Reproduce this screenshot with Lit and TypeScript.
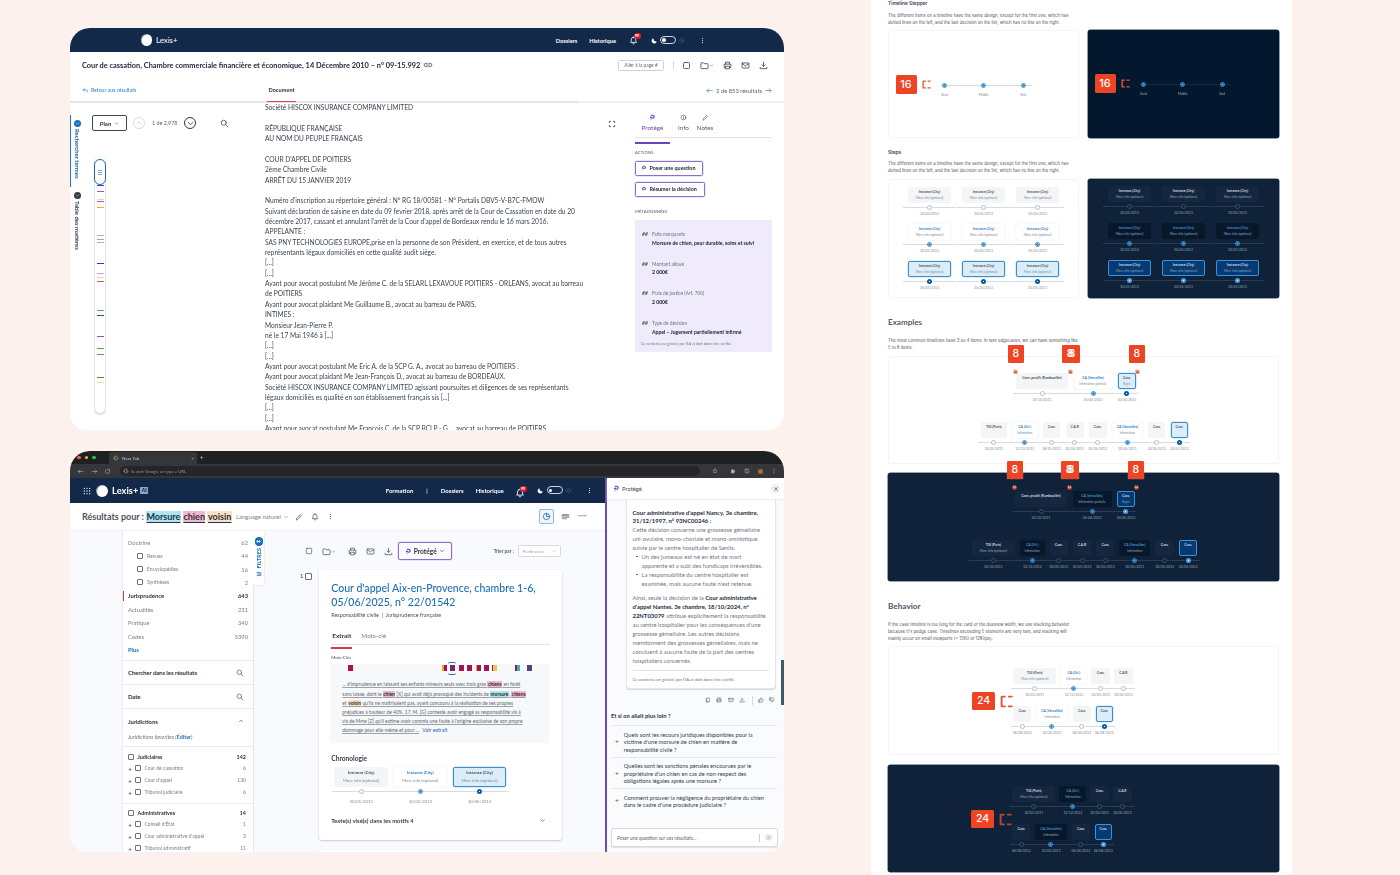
import { LitElement, html, css, svg, nothing } from 'lit';
import { customElement } from 'lit/decorators.js';

const P: Record<string, any> = {
  bell: svg`<path d="M6 1.6a2.9 2.9 0 0 0-2.9 2.9c0 2.8-1.1 4-1.1 4h8s-1.1-1.2-1.1-4A2.9 2.9 0 0 0 6 1.6zM5 10.2a1.1 1.1 0 0 0 2 0"/>`,
  moon: svg`<path fill="currentColor" stroke="none" d="M10 7.6A4.6 4.6 0 0 1 4.4 2 4.6 4.6 0 1 0 10 7.6z"/>`,
  sun: svg`<circle cx="6" cy="6" r="2.2"/><path d="M6 1v1.3M6 9.7V11M1 6h1.3M9.7 6H11M2.5 2.5l.9.9M8.6 8.6l.9.9M2.5 9.5l.9-.9M8.6 3.4l.9-.9"/>`,
  kebab: svg`<circle cx="6" cy="2.5" r="1" fill="currentColor" stroke="none"/><circle cx="6" cy="6" r="1" fill="currentColor" stroke="none"/><circle cx="6" cy="9.5" r="1" fill="currentColor" stroke="none"/>`,
  search: svg`<circle cx="5" cy="5" r="3.4"/><path d="M7.6 7.6l3 3"/>`,
  folder: svg`<path d="M1.2 3.2a.8.8 0 0 1 .8-.8h2.6l1 1.2H10a.8.8 0 0 1 .8.8v5a.8.8 0 0 1-.8.8H2a.8.8 0 0 1-.8-.8z"/>`,
  print: svg`<path d="M3.4 4V1.6h5.2V4M3.4 8.6H1.6V4.2h8.8v4.4H8.6M3.4 7h5.2v3.4H3.4z"/>`,
  mail: svg`<rect x="1.4" y="2.6" width="9.2" height="6.8" rx="1"/><path d="M1.6 3.4L6 6.6l4.4-3.2"/>`,
  dl: svg`<path d="M6 1.6v5.6M3.8 5L6 7.2 8.2 5M1.6 8.4v1.8h8.8V8.4"/>`,
  square: svg`<rect x="2" y="2" width="8" height="8" rx="1.2"/>`,
  chev: svg`<path d="M3 4.6L6 7.6l3-3"/>`,
  chevup: svg`<path d="M3 7.4L6 4.4l3 3"/>`,
  link: svg`<path d="M5 4H3.4a2 2 0 0 0 0 4H5M7 4h1.6a2 2 0 0 1 0 4H7M4.2 6h3.6"/>`,
  back: svg`<path d="M4.4 2.6L2 5l2.4 2.4M2 5h5a2.6 2.6 0 0 1 2.6 2.6v.8"/>`,
  left: svg`<path d="M10.6 6H1.6M4.6 3L1.6 6l3 3"/>`,
  right: svg`<path d="M1.4 6h9M7.4 3l3 3-3 3"/>`,
  expand: svg`<path d="M2 4V2h2M8 2h2v2M10 8v2H8M4 10H2V8"/>`,
  info: svg`<circle cx="6" cy="6" r="4.2"/><path d="M6 5.6v2.6M6 3.8v.4"/>`,
  pen: svg`<path d="M2 10l.6-2.4 5.4-5.4 1.8 1.8-5.4 5.4z"/>`,
  grid: svg`<g fill="currentColor" stroke="none"><circle cx="2" cy="2" r="1"/><circle cx="6" cy="2" r="1"/><circle cx="10" cy="2" r="1"/><circle cx="2" cy="6" r="1"/><circle cx="6" cy="6" r="1"/><circle cx="10" cy="6" r="1"/><circle cx="2" cy="10" r="1"/><circle cx="6" cy="10" r="1"/><circle cx="10" cy="10" r="1"/></g>`,
  chart: svg`<circle cx="6" cy="6" r="4.2"/><path d="M6 1.8V6h4.2"/>`,
  lines: svg`<g fill="currentColor" stroke="none"><rect x="1" y="3" width="10" height="2"/><rect x="1" y="6" width="10" height="1.6"/><rect x="1" y="8.6" width="7" height="1"/></g>`,
  minus: svg`<path d="M1 5h3M5.4 5h1.4M8 5h3"/>`,
  x: svg`<path d="M3 3l6 6M9 3l-6 6"/>`,
  copy: svg`<path d="M4 2h5v7H4zM2.4 3.6v6.8h5"/>`,
  up: svg`<path d="M1.8 5.4h1.8v5H1.8zM3.6 5.4L5.8 1.6c1 0 1.2.8 1 1.6l-.4 1.6h3c.6 0 .9.5.8 1l-.8 3.8c-.1.4-.4.6-.8.6H3.6"/>`,
  down: svg`<path d="M1.8 6.6h1.8v-5H1.8zM3.6 6.6l2.2 3.8c1 0 1.2-.8 1-1.6L6.4 7.2h3c.6 0 .9-.5.8-1l-.8-3.8c-.1-.4-.4-.6-.8-.6H3.6"/>`,
  sparkle: svg`<circle cx="6" cy="6" r="4.4"/><path d="M6 3.6v4.8M3.6 6h4.8"/>`,
  cal: svg`<rect x="2" y="3" width="8" height="7.4" rx=".8" fill="currentColor"/><path d="M2 5.4h8M4 1.6V3.4M8 1.6V3.4" stroke="#fff"/>`,
  bracket: svg`<path d="M4.5 1.5H1.5V10.5H4.5" stroke-width="1.8"/><path d="M8 1.5h3M8 10.5h3" stroke-width="1.5"/>`,
  arrowback: svg`<path d="M10 6H2M5 3L2 6l3 3"/>`,
  arrowfwd: svg`<path d="M2 6h8M7 3l3 3-3 3"/>`,
  reload: svg`<path d="M9.6 6a3.6 3.6 0 1 1-1-2.5L9.6 4.6V2"/>`,
  star: svg`<path d="M6 1.6l1.3 2.9 3.1.3-2.4 2 .8 3L6 8.3 3.2 9.8l.8-3-2.4-2 3.1-.3z"/>`,
  puzzle: svg`<path fill="currentColor" stroke="none" d="M2 3.6h2.2a1.2 1.2 0 1 1 2.4 0H9v2.2a1.2 1.2 0 1 1 0 2.4v2.2H2z"/>`,
  split: svg`<rect x="2" y="2.4" width="8" height="7.2" rx=".8"/><path d="M6 2.4v7.2"/>`,
  filter: svg`<path d="M2 3h8M2 6h8M2 9h8"/><circle cx="4" cy="3" r="1" fill="#fff"/><circle cx="8" cy="6" r="1" fill="#fff"/><circle cx="5" cy="9" r="1" fill="#fff"/>`,
};

const icon = (n: string, s = 9, cls = '') => html`<svg class="ic ${cls}" width=${s} height=${s} viewBox="0 0 12 12" fill="none" stroke="currentColor" stroke-width="1.1" stroke-linecap="round" stroke-linejoin="round" aria-hidden="true">${P[n]}</svg>`;

const protege = (s = 7) => html`<svg class="ic" width=${s} height=${s} viewBox="0 0 12 12" aria-hidden="true"><path fill="#7a55d6" d="M3 1.4h3.6a3.4 3.4 0 0 1 0 6.8H5V6h1.4a1.2 1.2 0 0 0 0-2.4H3z"/><path fill="#16234a" d="M2 4.6h2.6v2.6H2z"/><path fill="#b9a5ef" d="M3 8h2v2.6H3z"/></svg>`;

const gicon = () => html`<svg class="ic" width="6" height="6" viewBox="0 0 12 12" aria-hidden="true"><path fill="#ea4335" d="M6 1a5 5 0 0 1 3.6 1.5L8 4a2.8 2.8 0 0 0-4.3.8L2 3.4A5 5 0 0 1 6 1z"/><path fill="#fbbc05" d="M1.6 3.8l1.9 1.4a2.8 2.8 0 0 0 .2 2L2 8.5a5 5 0 0 1-.4-4.7z"/><path fill="#34a853" d="M2.3 9l1.7-1.3A2.8 2.8 0 0 0 8 8.2l1.5 1.4A5 5 0 0 1 2.3 9z"/><path fill="#4285f4" d="M11 6c0 1.3-.5 2.4-1.2 3.2L8.3 7.9c.3-.3.5-.7.6-1H6V5h4.9c.1.3.1.6.1 1z"/></svg>`;

type Item = [number, string, string, string, string];

const strip = (items: Item[], g: number, left = 0, cls = '') => html`
  <div class="strip ${cls}" style="--g:${g}px;margin-left:${left}px">
    ${items.map(([w, t, s, st, d]) => html`
      <div class="cell" style="width:${w}px">
        <div class="tbox ${st}">
          <div class="tt">${t}</div>
          ${s ? html`<div class="ts">${s}</div>` : nothing}
        </div>
        <div class="trail"><span class="node ${st}"></span></div>
        <div class="tdate">${d}</div>
      </div>`)}
  </div>`;

const D = '30/05/2013';
const ex1: Item[] = [
  [52, "Cons. prud'h (Rambouillet)", '', 'idle', '20/10/2011'],
  [39, 'CA (Versailles)', 'Infirmation partielle', 'on', '26/04/2012'],
  [17.7, 'Cass.', 'Rejet', 'act', '30/05/2013'],
];
const ex2 = (a: number, b: number, c: number, d: number, e: number, f: number, h: number, i: number, sub = ''): Item[] => [
  [a, 'TGI (Paris)', sub, 'idle', '20/03/2011'],
  [b, 'CA (Orl.)', 'Infirmation', 'on', '12/12/2012'],
  [c, 'Cass.', '', 'idle', '28/05/2013'],
  [d, 'C.A.R', '', 'idle', D],
  [e, 'Cass.', '', 'idle', D],
  [f, 'CA (Versailles)', 'Infirmation', 'on', '30/05/2011'],
  [h, 'Cass.', '', 'idle', D],
  [i, 'Cass.', '', 'act', D],
];
const be1: Item[] = [
  [43, 'TGI (Paris)', 'More info (optional)', 'idle', '20/03/2011'],
  [27, 'CA (Orl.)', 'Infirmation', 'on', '12/12/2012'],
  [18.7, 'Cass.', '', 'idle', '30/05/2013'],
  [18.7, 'C.A.R', '', 'idle', '30/05/2013'],
];
const be2: Item[] = [
  [18, 'Cass.', '', 'idle', '06/08/2012'],
  [32, 'CA (Versailles)', 'Infirmation', 'on', '30/05/2013'],
  [18.3, 'Cass.', '', 'idle', '06/05/2012'],
  [17.3, 'Cass.', '', 'act', '06/08/2013'],
];

const stepsGrid = () => html`${['idle', 'on', 'act'].map((st) => [0, 1, 2].map(() =>
  strip([[43.5, 'Instance (City)', 'More info (optional)', st, D]], 10)))}`;

const mini = () => html`
  <div class="mini">
    <div class="b16">16</div>
    <span class="brk">${icon('bracket', 9)}</span>
    <div class="ms">
      ${['Start', 'Middle', 'End'].map((l, i) => html`
        <div class="mcol">
          <div class="mrail r${i}"><span class="node on"></span></div>
          <div class="mlab">${l}</div>
        </div>`)}
    </div>
  </div>`;

const bdg = (x: number, y: number, t: string, cls = '') => html`<div class="b8 ${cls}" style="left:${x}px;top:${y}px">${t}</div>`;
const cal = (x: number, y: number) => html`<span class="calp" style="left:${x}px;top:${y}px">${icon('cal', 5)}</span>`;
const b8s = (top: number) => html`
  ${bdg(119, top, '8')}${bdg(173, top, '88', 'w')}${bdg(240, top, '8')}
  ${cal(123.5, top + 24)}${cal(178.5, top + 24)}${cal(245.5, top + 24)}`;

const docLines = [
  'Société HISCOX INSURANCE COMPANY LIMITED', '', 'RÉPUBLIQUE FRANÇAISE', 'AU NOM DU PEUPLE FRANÇAIS', '',
  "COUR D'APPEL DE POITIERS", '2ème Chambre Civile', 'ARRÊT DU 15 JANVIER 2019', '',
  "Numéro d'inscription au répertoire général : N° RG 18/00581 - N° Portalis DBV5-V-B7C-FMOW",
  'Suivant déclaration de saisine en date du 09 fevrier 2018, après arrêt de la Cour de Cassation en date du 20',
  "décembre 2017, cassant et annulant l'arrêt de la Cour d'appel de Bordeaux rendu le 16 mars 2016.",
  'APPELANTE :',
  'SAS PNY TECHNOLOGIES EUROPE,prise en la personne de son Président, en exercice, et de tous autres',
  'représentants légaux domiciliés en cette qualité audit siège.', '[...]', '[...]',
  'Ayant pour avocat postulant Me Jérôme C. de la SELARL LEXAVOUE POITIERS - ORLEANS, avocat au barreau',
  'de POITIERS', 'Ayant pour avocat plaidant Me Guillaume B., avocat au barreau de PARIS.', 'INTIMES :',
  'Monsieur Jean-Pierre P.', 'né le 17 Mai 1946 à [...]', '[...]', '[...]',
  'Ayant pour avocat postulant Me Eric A. de la SCP G. A., avocat au barreau de POITIERS .',
  'Ayant pour avocat plaidant Me Jean-François D., avocat au barreau de BORDEAUX.',
  'Société HISCOX INSURANCE COMPANY LIMITED agissant poursuites et diligences de ses représentants',
  'légaux domiciliés es qualité en son établissement français sis [...]', '[...]', '[...]',
  'Ayant pour avocat postulant Me François C. de la SCP BCLP - G..., avocat au barreau de POITIERS',
];

const ticks: [number, string][] = [
  [185, '#3d3ec0'], [191, '#8a63d2'], [199, '#f7d4a3'], [201, '#8a63d2'], [207, '#f0a93c'],
  [235, '#b9a2e6'], [239, '#8fb595'], [242, '#b9a2e6'], [263, '#4a2ab0'], [273, '#b9a2e6'], [277, '#f7d4a3'], [281, '#b0606a'],
  [310, '#8a7cc8'], [315, '#1f6b2f'], [336, '#7a5cc0'], [348, '#5f9a6e'], [354, '#5f9a6e'], [377, '#6a7d2a'], [382, '#f7d4a3'],
];

const marks: [number, string, string][] = [
  [348, '#a3154e', ''], [442, '#a3154e', '#f5a623'], [450, '#7a2d5e', ''], [458.5, '#a3154e', ''], [466.7, '#a3154e', ''],
  [475.7, '#a3154e', '#f5a623'], [483.3, '#a3154e', ''], [491.3, '#f5c14e', '#a3154e'], [515, '#2fb8c4', '#a3154e'], [527, '#5a3d7c', ''],
];

@customElement('app-root')
export class AppRoot extends LitElement {
  static styles = css`
    :host { display: block; width: 1400px; height: 875px; overflow: hidden; background: #fdf1ed; font-family: Lato, 'Liberation Sans', sans-serif; color: #2b3442; }
    * { box-sizing: border-box; }
    .ic { display: block; flex: none; }
    .page { display: flex; height: 875px; padding-left: 70px; filter: blur(.3px); }
    .left { width: 714px; padding-top: 28px; display: flex; flex-direction: column; gap: 21px; flex: none; }
    .win { position: relative; width: 714px; height: 402px; background: #fff; border-radius: 20px 20px 16px 16px; overflow: hidden; display: flex; flex-direction: column; flex: none; }
    .win.b { height: 401px; background: #f9fafd; }
    .right { width: 421px; margin-left: 87px; background: #fff; padding: 0 13px 0 17px; flex: none; height: 875px; overflow: hidden; }

    /* headers */
    .hdr { height: 24px; background: #12294a; color: #fff; display: flex; align-items: center; flex: none; font-size: 5.7px; font-weight: 700; }
    .hdr.a { padding-left: 70.5px; }
    .globe { width: 11.5px; height: 11.5px; border-radius: 50%; background: radial-gradient(circle at 62% 55%, #fff 55%, #9aa6b4 70%); flex: none; }
    .brand { margin-left: 4px; font-size: 7.8px; font-weight: 400; }
    .nav { margin-left: auto; display: flex; align-items: center; }
    .hdr.a .nav { margin-right: 78px; }
    .navsp { margin-left: 12px; }
    .bellw { position: relative; margin-left: 12.5px; display: block; }
    .bellw.big { margin-left: 10.7px; }
    .dot99 { position: absolute; left: 5px; top: -2.5px; width: 7px; height: 6px; background: #e21b2c; border-radius: 4px; font-size: 3.4px; line-height: 6px; text-align: center; color: #fff; }
    .moon { margin-left: 13px; }
    .big ~ .moon { margin-left: 12.5px; }
    .tog { width: 16px; height: 8px; border: 1px solid #cfd6df; border-radius: 5px; margin-left: 2.5px; position: relative; }
    .tog::after { content: ''; position: absolute; left: 1.2px; top: 1.2px; width: 3.6px; height: 3.6px; border-radius: 50%; background: #fff; }
    .sun { margin-left: 2px; color: #43566f; }
    .keb { margin-left: 14px; }
    .title { height: 26px; padding-left: 12px; display: flex; align-items: center; flex: none; }
    .title h1 { margin: 0; font-size: 7.4px; font-weight: 700; color: #22293a; white-space: nowrap; }
    .title .lk { margin-left: 3px; color: #5a6470; }
    .tools { margin-left: auto; margin-right: 16.5px; display: flex; align-items: center; gap: 9px; color: #3f4856; }
    .goto { width: 46px; height: 11px; border: 1px solid #cdd2d9; border-radius: 1.5px; font-size: 4.8px; color: #666f7b; text-align: center; line-height: 9.5px; }
    .vs { width: 1px; height: 8px; background: #d4d8dd; margin-right: -1.5px; }
    .fold { display: flex; align-items: center; }
    .row3 { height: 25px; display: flex; position: relative; flex: none; border-bottom: 2px solid #f0f1f3; align-items: center; padding: 1px 0 0 12px; }
    .row3::after { content: ''; position: absolute; left: 0; bottom: -2px; width: 508px; height: 2px; background: #e3e5e8; }
    .backl { display: flex; align-items: center; gap: 2px; color: #2f7fc0; font-size: 5.2px; width: 185px; }
    .dtab { position: relative; font-size: 5.6px; font-weight: 700; color: #333; width: 29px; text-align: center; line-height: 10px; }
    .dtab::after { content: ''; position: absolute; left: 0; right: 0; bottom: -7px; height: 1.5px; background: #e0434f; z-index: 1; }
    .pager { margin-left: auto; margin-right: 12px; display: flex; align-items: center; gap: 3px; color: #2f7fc0; font-size: 5.8px; }
    .pager span { color: #5a6470; }

    /* body A */
    .bodya { flex: 1; display: flex; min-height: 0; }
    .rail { width: 20px; flex: none; padding-top: 12px; color: #3a4453; }
    .vtab { width: 20px; display: flex; flex-direction: column; align-items: center; }
    .vtab.on { height: 72px; border-left: 1.5px solid #1f78c4; color: #1f5f9e; padding-right: 6px; }
    .vtab.off { margin-top: 5px; padding-right: 6px; }
    .vc { width: 7px; height: 7px; border-radius: 50%; background: #1870bd; color: #fff; margin-top: 5px; display: flex; align-items: center; justify-content: center; }
    .vtab.off .vc { background: #333c48; margin-top: 0; }
    .vt { writing-mode: vertical-rl; margin-top: 2px; font-weight: 700; white-space: nowrap; line-height: 7px; font-size: 5.95px; }
    .plan { width: 175px; flex: none; padding-top: 12px; }
    .planbar { display: flex; align-items: center; height: 16px; padding-left: 2px; }
    .planbtn { width: 35px; height: 16px; border: 1px solid #3f4856; border-radius: 2px; font-size: 6px; font-weight: 700; display: flex; align-items: center; justify-content: center; gap: 3px; }
    .cc { width: 12px; height: 12px; border: 1px solid #d8dbe0; border-radius: 50%; margin-left: 6px; color: #c4c8ce; display: flex; align-items: center; justify-content: center; }
    .of { margin-left: 7px; font-size: 5.4px; color: #636c78; width: 27px; white-space: nowrap; }
    .cc.dk { border-color: #2b3442; color: #2b3442; margin-left: 5px; }
    .sr { margin-left: 24px; color: #4a5361; }
    .track { position: relative; margin: 28px 0 0 4px; width: 12px; height: 255px; border: 1px solid #e3e5e9; border-top: none; border-radius: 0 0 6px 6px; background: #fff; box-shadow: 0 1px 1px #d8dade; }
    .tick { position: absolute; left: 1.5px; right: 1.5px; height: 1.4px; }
    .handle { position: absolute; left: -1px; top: 0; width: 12px; height: 26px; border: 1.6px solid #1f68ae; border-radius: 6px; background: #fff; display: flex; align-items: center; justify-content: center; }
    .handle::after { content: ''; width: 4px; height: 5px; background: repeating-linear-gradient(#7aa3d0 0 1px, transparent 1px 2px); }
    .doc { width: 360px; flex: none; font-size: 6.6px; color: #3c4452; overflow: hidden; position: relative; margin-top: -1px; }
    .doc div { height: 10.37px; line-height: 10.37px; white-space: nowrap; }
    .side { flex: 1; padding-left: 10px; position: relative; }
    .exp { position: absolute; left: -17px; top: 17px; color: #333; }
    .stabs { display: flex; height: 35px; margin-right: 12px; border-bottom: 1px solid #e3e3ea; padding-top: 11px; }
    .stab { display: flex; flex-direction: column; align-items: center; font-size: 6.4px; color: #555e6b; gap: 3px; }
    .stab.act { width: 35px; color: #6946b9; position: relative; }
    .stab.act::after { content: ''; position: absolute; left: 0; right: 0; bottom: -6.5px; height: 1.2px; background: #6946b9; }
    .stab.i { margin-left: 7px; width: 13px; }
    .stab.n { margin-left: 6px; width: 18px; }
    .cap { font-size: 4.2px; color: #4e5663; letter-spacing: .1px; margin-top: 12px; line-height: 5px; }
    .ai { display: flex; align-items: center; gap: 2.5px; width: 68px; height: 15.5px; margin-top: 5.5px; border: 1px solid #8a6fce; border-radius: 1.5px; box-shadow: 0 0 0 .5px #d9cff2; font-size: 5.4px; font-weight: 700; padding-left: 5px; color: #22293a; }
    .ai.w { width: 70px; }
    .meta { width: 137px; height: 132px; margin-top: 6px; background: #efebfb; padding: 10px 0 0 7px; }
    .mrow { display: grid; grid-template-columns: 10px 1fr; grid-auto-rows: 8.5px; align-content: start; height: 29.7px; font-size: 4.8px; line-height: 8.5px; color: #6f7482; }
    .mrow b { grid-column: 2; color: #20243a; font-size: 5.1px; white-space: nowrap; }
    .hash { font-weight: 900; font-style: italic; color: #555; font-size: 5px; }
    .disc { font-size: 3.8px; color: #6f7482; margin-top: -7.5px; line-height: 5px; margin-left: -1px; }

    /* browser chrome */
    .c1 { height: 13px; background: #1f2022; display: flex; align-items: center; padding-left: 7.2px; color: #c6c8cc; flex: none; font-size: 4.6px; }
    .lamp { width: 3.6px; height: 3.6px; border-radius: 50%; margin-right: 4px; flex: none; }
    .lamp.r { background: #ee5f57; } .lamp.y { background: #f5bd2e; } .lamp.g { background: #29c840; }
    .ctab { margin-left: 9px; width: 88px; height: 12px; margin-top: 1px; background: #35363a; border-radius: 3px 3px 0 0; display: flex; align-items: center; padding: 0 3px 0 4px; gap: 3px; }
    .ctab i { margin-left: auto; font-style: normal; }
    .plus { margin-left: 3px; font-size: 6px; }
    .c2 { height: 14px; background: #35363a; display: flex; align-items: center; padding-left: 7px; color: #8f9296; flex: none; gap: 6.5px; }
    .url { width: 580px; height: 10px; background: #242528; border-radius: 5px; display: flex; align-items: center; padding-left: 3px; gap: 2px; margin-left: 2.5px; font-size: 4.4px; color: #8f9296; }
    .c2 .ic { color: #a8abaf; }
    .c2r { display: flex; gap: 8px; align-items: center; margin-left: 5.5px; }
    .c2r > :first-child { margin-right: 4px; }
    .av { width: 5px; height: 5px; border-radius: 50%; background: #b5653e; }

    .bwrap { flex: 1; display: flex; min-height: 0; }
    .bmain { width: 535px; flex: none; display: flex; flex-direction: column; min-height: 0; }
    .hdr.b { height: 25px; padding-left: 12.5px; font-size: 6px; }
    .lex { margin-left: 4px; font-size: 9.4px; font-weight: 700; }
    .bglobe { width: 12px; height: 12px; margin-left: 5.5px; }
    .aib { margin-left: 2px; width: 7.5px; height: 7px; background: #8aa3cf; color: #12294a; font-size: 5px; line-height: 7px; text-align: center; font-weight: 900; }
    .hdr.b .nav { margin-right: 12.5px; }
    .sepn { margin: 0 13px; font-weight: 400; }
    .res { height: 28px; background: #fff; border-bottom: 1px solid #eff1f4; display: flex; align-items: center; padding-left: 12px; flex: none; }
    .res h2 { margin: 0; font-size: 9px; font-weight: 700; color: #4a5260; white-space: nowrap; display: flex; gap: 2px; }
    .hl { padding: 0 .5px; color: #23304a; text-decoration: underline; text-underline-offset: 1.5px; text-decoration-thickness: .7px; }
    .hm { background: #aee6ef; } .hc { background: #f6b7cd; } .hv { background: #fde0bd; }
    .lang { margin-left: 4px; font-size: 6px; color: #7a818c; display: flex; align-items: center; gap: 2px; white-space: nowrap; }
    .rt { display: flex; align-items: center; margin-left: 6px; color: #4a5361; gap: 8px; }
    .rr { margin-left: auto; margin-right: 18px; display: flex; align-items: center; gap: 8px; color: #7a818c; }
    .cbtn { width: 15px; height: 15px; border: 1px solid #8cbbe0; border-radius: 2px; background: #eef6fc; color: #1e6fb0; display: flex; align-items: center; justify-content: center; margin-right: -1px; }
    .bcont { flex: 1; display: flex; min-height: 0; padding-left: 52px; }
    .sb { width: 132px; flex: none; background: #fff; border-left: 1px solid #eaecf0; border-right: 1px solid #e6e8ec; font-size: 5.8px; color: #7a818c; }
    .sec { border-bottom: 1px solid #e8eaee; padding: 0 5px 0 5px; }
    .sec.nav1 { height: 130px; padding-top: 4.6px; position: relative; }
    .nr { height: 13.4px; display: flex; align-items: center; justify-content: space-between; position: relative; white-space: nowrap; }
    .nr.ind { padding-left: 8.5px; }
    .nr.ind > span:first-child { display: flex; align-items: center; gap: 4.5px; font-size: 5px; }
    .nr.on { font-weight: 700; color: #2a3342; }
    .nr.on::before { content: ''; position: absolute; left: -5.5px; top: 1.5px; bottom: 1.5px; width: 1.2px; background: #d63848; }
    .cb { width: 6px; height: 6px; border: 1px solid #6a7078; border-radius: 1px; flex: none; display: inline-block; background: #fff; }
    .nr .plus2 { color: #1f6fb8; font-weight: 700; }
    .sec.h24 { height: 24px; display: flex; align-items: center; justify-content: space-between; font-weight: 700; color: #2a3342; padding-right: 9px; font-size: 5.8px; }
    .sec.h24 .ic { color: #5a6470; }
    .sec.jur { height: 38px; padding-right: 9px; color: #2a3342; font-weight: 700; }
    .jur .t { height: 24px; display: flex; align-items: center; justify-content: space-between; }
    .jur .f { font-weight: 400; color: #6f7682; font-style: italic; line-height: 8px; margin-top: 0; font-size: 5.4px; }
    .jur .f b { color: #1f6fb8; font-style: normal; }
    .grp { height: 57px; padding: 4px 7px 0 5px; border-bottom: 1px solid #eceef1; font-size: 5px; color: #7a818c; }
    .grp.last { border: none; padding-top: 3px; }
    .gh { height: 11.5px; display: flex; align-items: center; font-weight: 700; color: #2a3342; font-size: 5.4px; gap: 3.5px; }
    .gh em { margin-left: auto; font-style: normal; }
    .gi { height: 11.9px; display: flex; align-items: center; gap: 3.2px; }
    .gi em { margin-left: auto; font-style: normal; }
    .gi s { text-decoration: none; color: #454c57; font-weight: 700; width: 4px; font-size: 6px; text-align: center; }
    .ftab { width: 11px; height: 54px; background: #fff; flex: none; margin-left: -1px; border-radius: 0 2px 2px 0; box-shadow: 1px 1px 1px #eceef2; display: flex; flex-direction: column; align-items: center; padding-top: 5.5px; gap: 2.5px; color: #1f6fb8; }
    .ftab .vc2 { width: 8px; height: 9px; border-radius: 4.5px; background: #1870bd; display: flex; align-items: center; justify-content: center; color: #fff; font-size: 5px; line-height: 9px; font-weight: 900; }
    .ftab .vt2 { writing-mode: vertical-rl; transform: rotate(180deg); font-size: 5.6px; font-weight: 900; line-height: 6px; }
    .rcol { flex: 1; min-width: 0; padding-left: 36px; }
    .tbar { display: flex; align-items: center; height: 18px; margin-top: 11px; color: #5a6470; }
    .tg { display: flex; align-items: center; gap: 9px; margin-left: 4.5px; }
    .tg .fold { margin-left: .7px; margin-right: 3px; }
    .pb { width: 54px; height: 18px; margin-left: 4.5px; border: 1px solid #8a6fce; border-radius: 2px; box-shadow: 0 0 0 .5px #d9cff2; display: flex; align-items: center; justify-content: center; gap: 2px; font-size: 6.6px; font-weight: 700; color: #333; background: #fbfaff; }
    .tri { margin-left: 42px; font-size: 4.8px; font-weight: 700; color: #5c6470; white-space: nowrap; }
    .sel { width: 43px; height: 12px; margin-left: 4px; border: 1px solid #d6d9de; border-radius: 1.5px; display: flex; align-items: center; padding-left: 4px; font-size: 4.6px; color: #9aa0a8; justify-content: space-between; background: #fff; padding-right: 3px; }
    .rhead { display: flex; align-items: flex-start; margin-top: 10px; }
    .num { font-size: 5.6px; color: #333; padding-top: 2px; width: 5px; line-height: 7px; }
    .rhead .cb { margin-top: 3px; width: 6.5px; height: 6.5px; }
    .card { width: 243px; height: 270px; margin-left: 7.8px; background: #fff; border-radius: 0 0 3px 3px; box-shadow: 0 1px 2px #c6cad0, 0 0 1px #e1e3e7; padding: 11px 12px 0; flex: none; }
    .card h3 { margin: 0; font-size: 10.55px; line-height: 14px; font-weight: 500; color: #1d6fb5; white-space: nowrap; }
    .cmeta { font-size: 5.4px; margin-top: 2px; line-height: 8px; color: #4a5260; }
    .ct { display: flex; height: 14px; margin-top: 12px; border-bottom: 1px solid #e2e4e8; font-size: 6.4px; color: #7a818c; }
    .ct b { width: 21px; color: #2a3342; position: relative; line-height: 10px; text-align: center; margin-right: 9px; }
    .ct b::after { content: ''; position: absolute; left: 0; right: 0; bottom: -4.5px; height: 1.2px; background: #d63848; }
    .ct span { line-height: 10px; }
    .mcap { font-size: 4.4px; line-height: 6px; margin-top: 9.6px; color: #444c58; }
    .ext { position: relative; margin: 3.4px 0 0 -1px; width: 219px; height: 79px; background: #f6f8fa; padding: 16.4px 0 0 12px; }
    .ext p { margin: 0; font-size: 4.85px; line-height: 9.2px; color: #60666f; white-space: nowrap; }
    .ext u { text-decoration-color: #9ca1a8; text-underline-offset: .8px; text-decoration-thickness: .5px; }
    .ext i { font-style: normal; color: #222a38; font-weight: 700; text-decoration: none; padding: 0 .5px; }
    .ext a { color: #2562ad; margin-left: 2px; font-size: 5.2px; }
    .mk { position: absolute; top: 1px; width: 5px; height: 6px; }
    .mk::after { content: ''; position: absolute; left: 0; top: 0; bottom: 0; width: 1.4px; background: var(--s, transparent); }
    .fr { position: absolute; left: 117.5px; top: -2px; width: 8px; height: 13px; border: 1px solid #1f6fb8; border-width: 1px 0 1px 0; border-radius: 2px; }
    .chh { font-size: 6.6px; font-weight: 700; line-height: 8px; margin-top: 10.7px; color: #333d4c; }
    .big { --bh: 20px; --tsz: 4.2px; --ssz: 4.2px; --tl: 7.5px; --tp: 2.5px; --rail: 9.5px; --dsz: 4.2px; --dm: 2.5px; margin-top: 5.3px; }
    .tv { display: flex; justify-content: space-between; align-items: center; margin-top: 13px; font-size: 5.9px; font-weight: 700; color: #3a4352; line-height: 8px; padding-right: 4px; }
    .next { height: 10px; width: 243px; margin: 10px 0 0 19.3px; background: #fff; box-shadow: 0 0 1px #d8dade; }

    /* chat panel */
    .pan { flex: 1; display: flex; flex-direction: column; border-left: 2px solid #6a4db8; background: #fafbfd; min-height: 0; position: relative; }
    .phead { height: 21px; background: #fff; display: flex; align-items: center; padding: 0 4px 0 6px; gap: 2px; font-size: 5.8px; color: #444c58; flex: none; box-shadow: 0 1px 1px #eceef1; z-index: 1; }
    .xb { margin-left: auto; width: 9px; height: 9px; border-radius: 50%; background: #eef0f3; display: flex; align-items: center; justify-content: center; color: #333; }
    .pcard { width: 150px; height: 194px; margin: -4px 0 0 18.5px; background: #fff; border: 1px solid #e3e5e9; border-top: none; border-radius: 0 0 4px 4px; box-shadow: 0 1px 1px #d4d6da; padding: 0 6px; font-size: 5.9px; line-height: 9px; color: #727984; flex: none; overflow: hidden; }
    .pcard .cut { height: 6px; overflow: hidden; font-size: 4px; margin-bottom: 6px; line-height: 5px; }
    .pcard .hd { color: #262e3c; font-weight: 700; line-height: 7.5px; font-size: 5.95px; white-space: nowrap; padding-top: 2px; margin-bottom: 1px; }
    .pcard .l { white-space: nowrap; }
    .pcard .bl { padding-left: 9px; position: relative; white-space: nowrap; }
    .pcard .bl.d::before { content: ''; position: absolute; left: 3.5px; top: 3.5px; width: 1.6px; height: 1.6px; border-radius: 50%; background: #555; }
    .pcard b { color: #262e3c; }
    .pcard .mt5 { margin-top: 5px; }
    .pcard .foot { border-top: 1px solid #dfe1e5; margin-top: 5px; padding-top: 5px; font-size: 4.3px; line-height: 7px; color: #6a707a; white-space: nowrap; }
    .pact { display: flex; align-items: center; height: 22px; padding-left: 98px; gap: 5.4px; color: #5a6470; flex: none; }
    .pact i { width: 1px; height: 9px; background: #d5d8dc; margin: 0 0 0 1px; }
    .more { font-size: 5.8px; font-weight: 700; color: #2a3342; padding: 0 0 0 4px; line-height: 8px; margin-top: 1px; flex: none; }
    .qs { margin: 5px 7px 0 4px; flex: none; }
    .q { display: flex; align-items: center; gap: 5px; border-top: 1px solid #e5e7eb; font-size: 5.7px; line-height: 7.5px; color: #333c4a; padding: 4.5px 0 3.5px 4px; white-space: nowrap; }
    .q s { text-decoration: none; font-size: 6.5px; color: #555; }
    .inp { margin: auto 6px 5px 4px; height: 19px; border: 1px solid #d8dbe0; border-radius: 2px; background: #fff; box-shadow: 0 1px 1px #e1e3e6; display: flex; align-items: center; padding-left: 5px; font-size: 5.2px; color: #5f6670; font-style: italic; flex: none; }
    .inp i { margin-left: auto; width: 1px; height: 8px; background: #ccd0d5; }
    .inp .ic { margin: 0 5px; color: #b4b8be; }
    .scr { position: absolute; right: 0; top: 182px; width: 3px; height: 45px; background: #3d5a66; }

    /* right panel */
    .hs { margin: 0; font-family: Inter, Lato, sans-serif; font-size: 4.8px; font-weight: 600; line-height: 6px; color: #3a4150; }
    .hs.mt11 { margin-top: 11px; }
    .hl2 { margin: 20px 0 0; font-family: Lato, sans-serif; font-size: 8.2px; font-weight: 500; line-height: 10px; color: #333a48; }
    .hl2.e { margin-top: 19px; }
    .hl2.bh { font-weight: 700; color: #4a5268; margin-top: 20px; }
    .pr { margin: 5.5px 0 0; font-family: Inter, Lato, sans-serif; font-size: 4.25px; line-height: 7px; color: #4e5560; white-space: nowrap; }
    .pr.p2 { margin-top: 4.5px; }
    .pr.gap { margin-top: 9.5px; }
    .two { display: grid; grid-template-columns: 191px 191px; column-gap: 9px; margin-top: 4.5px; }
    .two.s { margin-top: 5.5px; }
    .exw { margin-top: 5.5px; }
    .h108 { height: 108px; }
    .cardl { border: 1px solid #f3f4f6; border-radius: 2.5px; background: #fff; position: relative; }
    .stg { height: 119px; display: grid; grid-template-columns: repeat(3, 43.5px); justify-content: center; column-gap: 10.5px; row-gap: 7px; padding-top: 7px; align-content: start; }
    .dark { background: #0f2239; border-radius: 2.5px; position: relative; box-shadow: 0 0 0 .5px #35465c; --idle-bg: #14273f; --tt: #d5dce5; --ts: #93a3b6; --on-bg: #08182b; --on-t: #3f95dc; --act-bg: #063a72; --act-b: #3b92d6; --line: #2a3c54; --date: #98a5b4; --nodei: #0f2239; --nodeb: #3c4f66; --ont: #0f2239; --actn: #4ba3e6; }
    .dark.card1d { background: #03182e; --line: #0e2a45; box-shadow: 0 0 0 .5px #2a3c54; }
    .lite { --idle-bg: #f3f5f7; --tt: #454d5a; --ts: #858b95; --on-bg: #fff; --on-t: #2b7bbf; --act-bg: #dcedfa; --act-b: #3f8ec9; --line: #d8dce2; --date: #868c96; --nodei: #fff; --nodeb: #b8bec6; --ont: #e3f0fa; --actn: #0a5aa4; }
    .strip { display: flex; gap: var(--g); width: max-content; }
    .cell { display: flex; flex-direction: column; align-items: center; flex: none; }
    .tbox { width: 100%; height: var(--bh, 16px); border-radius: 2px; text-align: center; padding-top: var(--tp, 2px); background: var(--idle-bg); white-space: nowrap; overflow: hidden; }
    .tbox.on { background: var(--on-bg); }
    .lite .tbox.on { box-shadow: 0 0 1px #bcc2ca; }
    .tbox.act { background: var(--act-bg); border: 1px solid var(--act-b); padding-top: calc(var(--tp, 2px) - 1px); }
    .lite .tbox.act { box-shadow: 0 0 0 .5px #bcdcf3; }
    .tt { font-size: var(--tsz, 3.4px); line-height: var(--tl, 6px); font-weight: 700; color: var(--tt); }
    .tbox.on .tt { color: var(--on-t); }
    .ts { font-size: var(--ssz, 3.2px); line-height: var(--tl, 6px); color: var(--ts); }
    .trail { position: relative; width: 100%; height: var(--rail, 9px); display: flex; align-items: center; justify-content: center; }
    .trail::before { content: ''; position: absolute; left: calc(var(--g) / -2); right: calc(var(--g) / -2); top: 50%; height: 1px; margin-top: -.5px; background: var(--line); }
    .node { position: relative; width: 5px; height: 5px; border-radius: 50%; border: .8px solid var(--nodeb); background: var(--nodei); }
    .node.on { border: 1px solid #3b8fd0; background: radial-gradient(circle, #3b8fd0 0 1px, var(--ont) 1.2px); }
    .node.act { border: none; background: radial-gradient(circle, #fff 0 .7px, var(--actn) .9px); }
    .tdate { font-size: var(--dsz, 3.4px); line-height: 5px; margin-top: var(--dm, 0); color: var(--date); white-space: nowrap; }
    .extable { height: 108px; padding-top: 16px; }
    .extable.d { padding-top: 18px; }
    .extable .strip + .strip { margin-top: 18.5px; }
    .be { height: 109px; padding-top: 21px; }
    .be .strip + .strip { margin-top: 7.5px; }
    .be.s4 { margin-top: 4.5px; }
    .be.d { margin-top: 10px; height: 107px; }
    .mt9 { margin-top: 9px; }
    .b8 { position: absolute; width: 15.5px; height: 17.5px; background: #ee4423; border-radius: 1.2px; color: #fff; font-family: Inter, sans-serif; font-size: 10.5px; font-weight: 500; line-height: 17.5px; text-align: center; box-shadow: 0 0 1px #fff; z-index: 2; }
    .b8.w { width: 17.5px; letter-spacing: -4.5px; padding-right: 4px; }
    .calp { position: absolute; color: #e24a33; z-index: 2; }
    .b16, .b24 { background: #ee4423; color: #fff; border-radius: 1.5px; font-family: Inter, sans-serif; font-weight: 500; text-align: center; flex: none; }
    .b16 { width: 21px; height: 19px; font-size: 11px; line-height: 19px; }
    .mini { display: flex; align-items: flex-start; padding: 43.5px 0 0 6.5px; }
    .brk { color: #e8553a; margin: 5.5px 0 0 5.5px; }
    .ms { display: grid; grid-template-columns: repeat(3, 39.3px); margin: 7px 0 0 -6px; }
    .mcol { display: flex; flex-direction: column; align-items: center; }
    .mrail { width: 100%; height: 7px; position: relative; display: flex; align-items: center; justify-content: center; }
    .mrail::before { content: ''; position: absolute; top: 3px; height: 1px; background: var(--line); left: 16px; right: -5px; }
    .mrail.r1::before { left: 4px; right: 4px; }
    .mrail.r2::before { left: -5px; right: 11px; }
    .mlab { font-size: 3.4px; line-height: 5px; margin-top: 4px; color: var(--date); }
    .b24w { position: absolute; left: 83px; top: 45px; display: flex; align-items: center; gap: 5px; z-index: 2; color: #e8553a; }
    .dark .b24w { color: #b5452f; }
    .b24 { width: 23px; height: 18px; font-size: 10.5px; line-height: 18px; }
  `;

  render() {
    return html`<div class="page">
      <div class="left">${this.winA()}${this.winB()}</div>
      ${this.rightPanel()}
    </div>`;
  }

  navEnd(big = false) {
    const s = big ? 10 : 9;
    return html`
      <span class="bellw ${big ? 'big' : ''}">${icon('bell', s)}<span class="dot99">99</span></span>
      <span class="moon">${icon('moon', 7)}</span><span class="tog"></span><span class="sun">${icon('sun', 7)}</span>
      <span class="keb">${icon('kebab', 7)}</span>`;
  }

  winA() {
    return html`<section class="win">
      <div class="hdr a">
        <span class="globe"></span><span class="brand">Lexis+</span>
        <div class="nav"><span>Dossiers</span><span class="navsp">Historique</span>${this.navEnd()}</div>
      </div>
      <div class="title">
        <h1>Cour de cassation, Chambre commerciale financière et économique, 14 Décembre 2010 – n° 09-15.992</h1>
        <span class="lk">${icon('link', 10)}</span>
        <div class="tools">
          <span class="goto">Aller à la page #</span><span class="vs"></span>
          ${icon('square', 9)}<span class="fold">${icon('folder', 9)}${icon('chev', 5)}</span>${icon('print', 9)}${icon('mail', 9)}${icon('dl', 9)}
        </div>
      </div>
      <div class="row3">
        <span class="backl">${icon('back', 7)}Retour aux résultats</span>
        <span class="dtab">Document</span>
        <span class="pager">${icon('left', 7)}<span>2 de 853 résultats</span>${icon('right', 7)}</span>
      </div>
      <div class="bodya">
        <div class="rail">
          <div class="vtab on"><span class="vc">${icon('chev', 5)}</span><span class="vt">Rechercher termes</span></div>
          <div class="vtab off"><span class="vc">${icon('chev', 5)}</span><span class="vt">Table des matières</span></div>
        </div>
        <div class="plan">
          <div class="planbar">
            <span class="planbtn">Plan ${icon('chev', 5)}</span>
            <span class="cc">${icon('chevup', 8)}</span><span class="of">1 de 2,978</span>
            <span class="cc dk">${icon('chev', 9)}</span><span class="sr">${icon('search', 9)}</span>
          </div>
          <div class="track">
            ${ticks.map(([y, c]) => html`<span class="tick" style="top:${y - 159}px;background:${c}"></span>`)}
            <span class="handle"></span>
          </div>
        </div>
        <div class="doc">${docLines.map((l) => html`<div>${l || '\u00a0'}</div>`)}</div>
        <div class="side">
          <span class="exp">${icon('expand', 8)}</span>
          <div class="stabs">
            <span class="stab act">${protege(7)}Protégé</span>
            <span class="stab i">${icon('info', 7)}Info</span>
            <span class="stab n">${icon('pen', 7)}Notes</span>
          </div>
          <div class="cap">ACTIONS</div>
          <div class="ai">${protege(6)}Poser une question</div>
          <div class="ai w">${protege(6)}Résumer la décision</div>
          <div class="cap">MÉTADONNÉES</div>
          <div class="meta">
            <div class="mrow"><span class="hash">##</span><span>Faits marquants</span><b>Morsure de chien, peur durable, soins et suivi</b></div>
            <div class="mrow"><span class="hash">##</span><span>Montant alloué</span><b>2 000€</b></div>
            <div class="mrow"><span class="hash">##</span><span>Frais de justice (Art. 700)</span><b>2 000€</b></div>
            <div class="mrow"><span class="hash">##</span><span>Type de décision</span><b>Appel – Jugement partiellement infirmé</b></div>
            <div class="disc">Ce contenu est généré par l'IA et doit donc être vérifié.</div>
          </div>
        </div>
      </div>
    </section>`;
  }

  winB() {
    const gi = (t: string, n: string) => html`<div class="gi"><s>+</s><span class="cb"></span><span>${t}</span><em>${n}</em></div>`;
    return html`<section class="win b">
      <div class="c1">
        <span class="lamp r"></span><span class="lamp y"></span><span class="lamp g"></span>
        <span class="ctab">${gicon()}<span>New Tab</span><i>×</i></span><span class="plus">+</span>
      </div>
      <div class="c2">
        ${icon('arrowback', 7)}${icon('arrowfwd', 7)}${icon('reload', 7)}
        <span class="url">${gicon()}Search Google or type a URL</span>
        <span class="c2r">${icon('star', 6)}${icon('puzzle', 6)}${icon('split', 6)}<span class="av"></span>${icon('kebab', 6)}</span>
      </div>
      <div class="bwrap">
        <div class="bmain">
          <div class="hdr b">
            ${icon('grid', 8)}<span class="globe bglobe"></span><span class="lex">Lexis+</span><span class="aib">AI</span>
            <div class="nav"><span>Formation</span><span class="sepn">|</span><span>Dossiers</span><span class="navsp">Historique</span>${this.navEnd(true)}</div>
          </div>
          <div class="res">
            <h2>Résultats pour : <span class="hl hm">Morsure</span><span class="hl hc">chien</span><span class="hl hv">voisin</span></h2>
            <span class="lang">Language naturel ${icon('chev', 6)}</span>
            <span class="rt">${icon('pen', 8)}${icon('bell', 8)}${icon('kebab', 7)}</span>
            <span class="rr"><span class="cbtn">${icon('chart', 9)}</span>${icon('lines', 9)}${icon('minus', 9)}</span>
          </div>
          <div class="bcont">
            <div class="sb">
              <div class="sec nav1">
                <div class="nr"><span>Doctrine</span><span>62</span></div>
                <div class="nr ind"><span><i class="cb"></i>Revues</span><span>44</span></div>
                <div class="nr ind"><span><i class="cb"></i>Encyclopédies</span><span>16</span></div>
                <div class="nr ind"><span><i class="cb"></i>Synthèses</span><span>2</span></div>
                <div class="nr on"><span>Jurisprudence</span><span>643</span></div>
                <div class="nr"><span>Actualités</span><span>231</span></div>
                <div class="nr"><span>Pratique</span><span>340</span></div>
                <div class="nr"><span>Codes</span><span>3390</span></div>
                <div class="nr"><span class="plus2">Plus</span></div>
              </div>
              <div class="sec h24"><span>Chercher dans les résultats</span>${icon('search', 8)}</div>
              <div class="sec h24"><span>Date</span>${icon('search', 8)}</div>
              <div class="sec jur"><div class="t"><span>Juridictions</span>${icon('chevup', 6)}</div><div class="f">Juridictions favorites (<b>Éditer</b>)</div></div>
              <div class="grp"><div class="gh"><span class="cb"></span>Judiciaires<em>142</em></div>${gi('Cour de cassation', '6')}${gi("Cour d'appel", '130')}${gi('Tribunal judiciaire', '6')}</div>
              <div class="grp last"><div class="gh"><span class="cb"></span>Administratives<em>14</em></div>${gi("Conseil d'État", '1')}${gi("Cour administrative d'appel", '3')}${gi('Tribunal administratif', '11')}</div>
            </div>
            <div class="ftab"><span class="vc2">↔</span><span class="vt2">FILTRES</span>${icon('filter', 6)}</div>
            <div class="rcol">
              <div class="tbar">
                <span class="tg">${icon('square', 8)}<span class="fold">${icon('folder', 9)}${icon('chev', 5)}</span>${icon('print', 9)}${icon('mail', 9)}${icon('dl', 9)}</span>
                <span class="pb">${protege(7)}Protégé ${icon('chev', 6)}</span>
                <span class="tri">Trier par :</span>
                <span class="sel">Pertinence ${icon('chev', 5)}</span>
              </div>
              <div class="rhead">
                <span class="num">1</span><span class="cb"></span>
                <article class="card">
                  <h3>Cour d'appel Aix-en-Provence, chambre 1-6,<br />05/06/2025, n° 22/01542</h3>
                  <div class="cmeta">Responsabilité civile &nbsp;|&nbsp; Jurisprudence française</div>
                  <div class="ct"><b>Extrait</b><span>Mots-clé</span></div>
                  <div class="mcap">Mots-Clés</div>
                  <div class="ext">
                    ${marks.map(([x, c, s]) => html`<span class="mk" style="left:${x - 330}px;background:${c};--s:${s}"></span>`)}
                    <span class="fr"></span>
                    <p><u>... d'imprudence en laissant ses enfants mineurs seuls avec trois gros <i class="hc">chiens</i> en forêt</u><br />
                    <u>sans laisse, dont le <i class="hc">chien</i> [X] qui avait déjà provoqué des incidents de <i class="hm">morsure</i>. <i class="hc">chiens</i></u><br />
                    <u>et <i class="hv">voisin</i> qu'ils ne maîtrisaient pas, ayant concouru à la réalisation de ses propres</u><br />
                    <u>préjudices à hauteur de 40%. 17. M. [G] conteste avoir engagé sa responsabilité vis à</u><br />
                    <u>vis de Mme [Z] qu'il estime avoir commis une faute à l'origine exclusive de son propre</u><br />
                    <u>dommage pour elle-même et pour ...</u> <a>Voir extrait</a></p>
                  </div>
                  <div class="chh">Chronologie</div>
                  <div class="lite">${strip([
                    [53.7, 'Instance (City)', 'More info (optional)', 'idle', D],
                    [53.7, 'Instance (City)', 'More info (optional)', 'on', D],
                    [53.7, 'Instance (City)', 'More info (optional)', 'act', D],
                  ], 5.5, 3, 'big')}</div>
                  <div class="tv"><span>Texte(s) visé(s) dans les motifs 4</span>${icon('chev', 7)}</div>
                </article>
              </div>
              <div class="next"></div>
            </div>
          </div>
        </div>
        <aside class="pan">
          <div class="phead">${protege(7)}<span>Protégé</span><span class="xb">${icon('x', 6)}</span></div>
          <div class="pcard">
            <div class="cut">Ce contenu est généré par l'IA et doit</div>
            <div class="hd">Cour administrative d'appel Nancy, 3e chambre,<br />31/12/1997, n° 93NC00246 :</div>
            <div class="l">Cette décision concerne une grossesse gémellaire</div>
            <div class="l">uni-ovulaire, mono-choriale et mono-amniotique</div>
            <div class="l">suivie par le centre hospitalier de Senlis.</div>
            <div class="bl d">Un des jumeaux est né en état de mort</div>
            <div class="bl">apparente et a subi des handicaps irréversibles.</div>
            <div class="bl d">La responsabilité du centre hospitalier est</div>
            <div class="bl">examinée, mais aucune faute n'est retenue.</div>
            <div class="l mt5">Ainsi, seule la décision de la <b>Cour administrative</b></div>
            <div class="l"><b>d'appel Nantes, 3e chambre, 18/10/2024, n°</b></div>
            <div class="l"><b>22NT03079</b> attribue explicitement la responsabilité</div>
            <div class="l">au centre hospitalier pour les conséquences d'une</div>
            <div class="l">grossesse gémellaire. Les autres décisions</div>
            <div class="l">mentionnent des grossesses gémellaires, mais ne</div>
            <div class="l">concluent à aucune faute de la part des centres</div>
            <div class="l">hospitaliers concernés.</div>
            <div class="foot">Ce contenu est généré par l'IA et doit donc être vérifié.</div>
          </div>
          <div class="pact">${icon('copy', 6)}${icon('print', 6)}${icon('mail', 6)}${icon('dl', 6)}<i></i>${icon('up', 6)}${icon('down', 6)}</div>
          <div class="more">Et si on allait plus loin ?</div>
          <div class="qs">
            <div class="q"><s>+</s><span>Quels sont les recours juridiques disponibles pour la<br />victime d'une morsure de chien en matière de<br />responsabilité civile ?</span></div>
            <div class="q"><s>+</s><span>Quelles sont les sanctions pénales encourues par le<br />propriétaire d'un chien en cas de non-respect des<br />obligations légales après une morsure ?</span></div>
            <div class="q"><s>+</s><span>Comment prouver la négligence du propriétaire du chien<br />dans le cadre d'une procédure judiciaire ?</span></div>
          </div>
          <div class="inp">Poser une question sur ces résultats...<i></i>${icon('sparkle', 7)}</div>
          <span class="scr"></span>
        </aside>
      </div>
    </section>`;
  }

  rightPanel() {
    const pText = 'The different items on a timeline have the same design, except for the first one, which has';
    const pText2 = 'dotted lines on the left, and the last decision on the list, which has no line on the right.';
    return html`<aside class="right">
      <h4 class="hs">Timeline Stepper</h4>
      <p class="pr">${pText}<br />${pText2}</p>
      <div class="two">
        <div class="cardl h108 lite">${mini()}</div>
        <div class="dark card1d h108">${mini()}</div>
      </div>
      <h4 class="hs mt11">Steps</h4>
      <p class="pr p2">${pText}<br />${pText2}</p>
      <div class="two s">
        <div class="cardl stg lite">${stepsGrid()}</div>
        <div class="dark stg">${stepsGrid()}</div>
      </div>
      <h3 class="hl2 e">Examples</h3>
      <p class="pr gap">The most common timelines have 3 ou 4 items. In rare edgecases, we can have something like<br />5 to 8 items.</p>
      <div class="exw">
        <div class="cardl extable lite">
          ${b8s(-12)}
          ${strip(ex1, 5.5, 127)}
          ${strip(ex2(25.7, 25.7, 17.7, 18, 17.7, 31.3, 17.3, 17.3), 5.2, 92)}
        </div>
        <div class="dark extable d mt9">
          ${b8s(-12)}
          ${strip(ex1, 5.5, 127)}
          ${strip(ex2(43.3, 25, 18.3, 18.7, 18.3, 31, 19.3, 18, 'More info (optional)'), 4.8, 83.7)}
        </div>
      </div>
      <h3 class="hl2 bh">Behavior</h3>
      <p class="pr gap">If the case timeline is too long for the card or the dueview width, we use stacking behavior<br />because it's pedge case. Timelines exceeding 5 elements are very rare, and stacking will<br />mainly occur on small viewports (&lt; 1360 or 1280px).</p>
      <div class="cardl be lite s4">
        <div class="b24w"><div class="b24">24</div>${icon('bracket', 13)}</div>
        ${strip(be1, 4, 124.3)}${strip(be2, 4.7, 124.3)}
      </div>
      <div class="dark be d">
        <div class="b24w"><div class="b24">24</div>${icon('bracket', 13)}</div>
        ${strip(be1, 4, 124.3)}${strip(be2, 4.7, 124.3)}
      </div>
    </aside>`;
  }
}
